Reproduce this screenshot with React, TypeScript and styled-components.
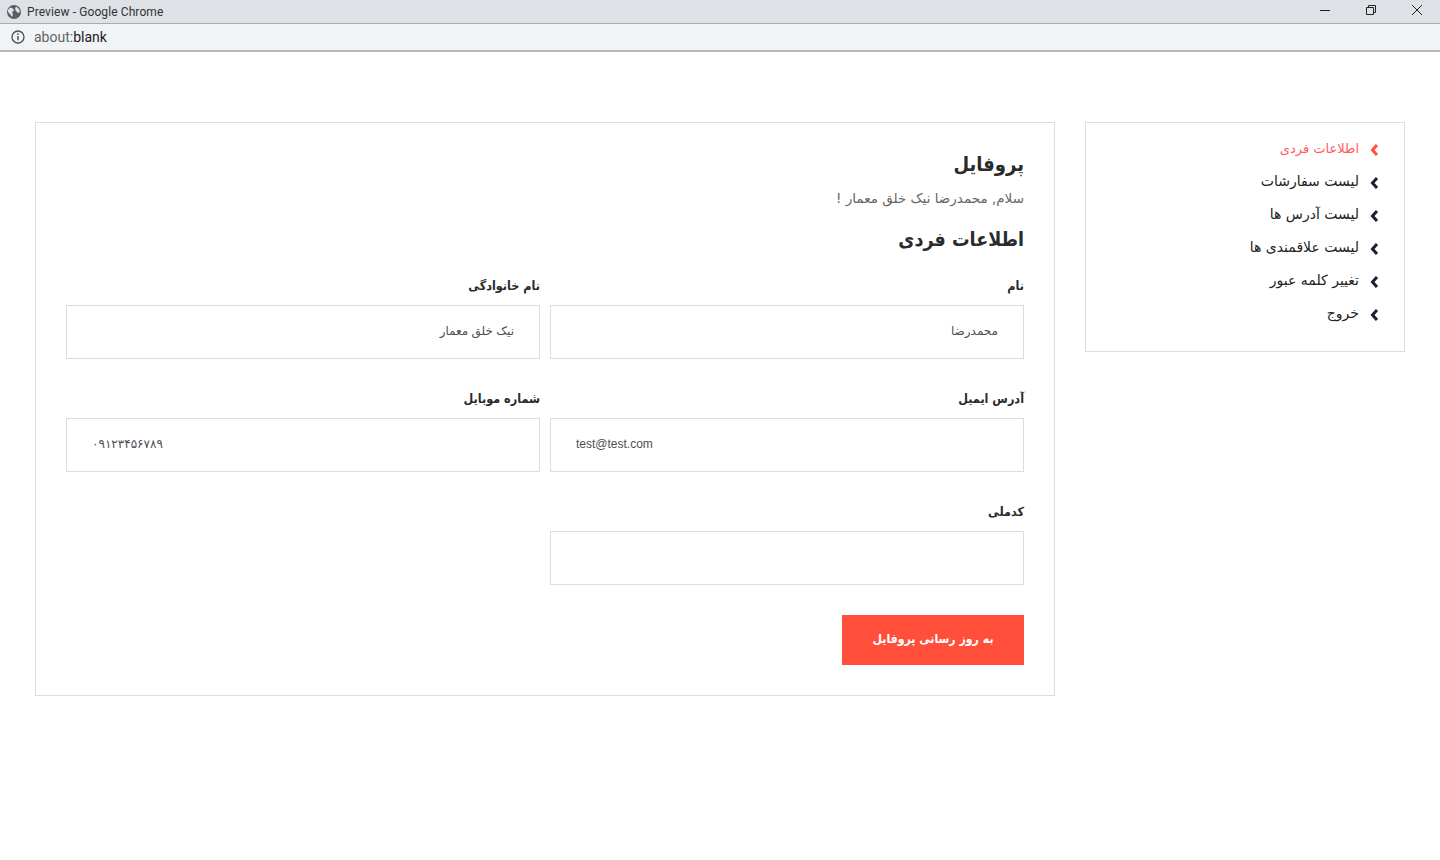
import React from 'react'
import styled, { createGlobalStyle } from 'styled-components'

const GlobalStyle = createGlobalStyle`
  html, body {
    margin: 0;
    padding: 0;
    background: #fff;
    font-family: "DejaVu Sans", "Noto Sans", sans-serif;
  }
  * { box-sizing: border-box; }
`

const menuItems = [
  'اطلاعات فردی',
  'لیست سفارشات',
  'لیست آدرس ها',
  'لیست علاقمندی ها',
  'تغییر کلمه عبور',
  'خروج',
]

const App = () => {
  return (
    <>
      <GlobalStyle />
      <TitleBar>
        <TitleLeft>
          <svg width='14' height='14' viewBox='0 0 14 14'>
            <circle cx='7' cy='7' r='7' fill='#5a5d62' />
            <path d='M3 2.5l3 1 1 2-2 1.5 1 2.5-1 2.5-2-3-2-2 0-2zM9 1.5l3 2.5 1 3-2 1-2-2-1-2z' fill='#dee1e6' />
          </svg>
          <TitleText>Preview - Google Chrome</TitleText>
        </TitleLeft>
        <WindowButtons>
          <svg width='10' height='10' viewBox='0 0 10 10'>
            <path d='M0 5.5h10' stroke='#222' fill='none' />
          </svg>
          <svg width='10' height='10' viewBox='0 0 10 10'>
            <path d='M.5 2.5h7v7h-7zM2.5 2.5v-2h7v7h-2' stroke='#222' fill='none' />
          </svg>
          <svg width='10' height='10' viewBox='0 0 10 10'>
            <path d='M0 0l10 10M10 0L0 10' stroke='#222' fill='none' />
          </svg>
        </WindowButtons>
      </TitleBar>
      <AddressBar>
        <svg width='14' height='14' viewBox='0 0 14 14'>
          <circle cx='7' cy='7' r='6' stroke='#4a4d52' strokeWidth='1.3' fill='none' />
          <path d='M7 6v4.2M7 3.6v1.3' stroke='#4a4d52' strokeWidth='1.4' fill='none' />
        </svg>
        <Url>
          <span>about:</span>
          <b>blank</b>
        </Url>
      </AddressBar>

      <Page dir='rtl'>
        <Sidebar>
          <MenuList>
            {menuItems.map((item, i) => (
              <MenuItem key={item} $active={i === 0}>
                <Chevron width='10' height='14' viewBox='0 0 10 14'>
                  <path d='M8 2L3.5 7 8 12' stroke='currentColor' strokeWidth='3' fill='none' />
                </Chevron>
                <MenuText $active={i === 0}>{item}</MenuText>
              </MenuItem>
            ))}
          </MenuList>
        </Sidebar>

        <Card>
          <Heading>پروفایل</Heading>
          <Greeting>سلام, محمدرضا نیک خلق معمار !</Greeting>
          <SubHeading>اطلاعات فردی</SubHeading>
          <FormGrid>
            <Field>
              <Label>نام</Label>
              <Input defaultValue='محمدرضا' />
            </Field>
            <Field>
              <Label>نام خانوادگی</Label>
              <Input defaultValue='نیک خلق معمار' />
            </Field>
            <Field>
              <Label>آدرس ایمیل</Label>
              <Input dir='ltr' defaultValue='test@test.com' />
            </Field>
            <Field>
              <Label>شماره موبایل</Label>
              <Input dir='ltr' defaultValue='۰۹۱۲۳۴۵۶۷۸۹' />
            </Field>
            <Field>
              <Label>کدملی</Label>
              <Input />
            </Field>
          </FormGrid>
          <SubmitButton type='button'>به روز رسانی پروفایل</SubmitButton>
        </Card>
      </Page>
    </>
  )
}

const TitleBar = styled.div`
  height: 24px;
  background: #dee1e6;
  border-bottom: 1px solid #a9abae;
  display: flex;
  align-items: center;
  justify-content: space-between;
  padding: 0 18px 0 7px;
`

const TitleLeft = styled.div`
  display: flex;
  align-items: center;
  gap: 6px;
`

const TitleText = styled.span`
  font-family: "Roboto", sans-serif;
  font-size: 12px;
  letter-spacing: 0.1px;
  color: #333;
`

const WindowButtons = styled.div`
  display: flex;
  align-items: center;
  gap: 36px;
  padding-bottom: 4px;
`

const AddressBar = styled.div`
  height: 28px;
  background: #f1f3f4;
  border-bottom: 2px solid #b5b6b7;
  display: flex;
  align-items: center;
  gap: 9px;
  padding: 0 11px;
`

const Url = styled.div`
  font-family: "Roboto", sans-serif;
  font-size: 14px;
  color: #5f6368;

  b {
    font-weight: 400;
    color: #202124;
  }
`

const Page = styled.main`
  display: flex;
  align-items: flex-start;
  gap: 30px;
  padding: 70px 35px 0;
`

const Sidebar = styled.aside`
  width: 320px;
  height: 230px;
  border: 1px solid #ddd;
  padding: 9px 25px;
  flex-shrink: 0;
`

const MenuList = styled.ul`
  list-style: none;
  margin: 0;
  padding: 0;
`

const MenuItem = styled.li<{ $active?: boolean }>`
  height: 33px;
  display: flex;
  align-items: center;
  gap: 10px;
  color: ${(p) => (p.$active ? '#ff4f3b' : '#1b2130')};
`

const Chevron = styled.svg`
  margin-top: 3px;
  flex-shrink: 0;
`

const MenuText = styled.span<{ $active?: boolean }>`
  margin-bottom: ${(p) => (p.$active ? '0' : '2px')};
  font-size: ${(p) => (p.$active ? '13px' : '14px')};
  line-height: 1;
  color: ${(p) => (p.$active ? '#ff5c5c' : '#222')};
`

const Card = styled.section`
  width: 1020px;
  height: 574px;
  border: 1px solid #ddd;
  padding: 30px;
  display: flex;
  flex-direction: column;
  align-items: flex-start;
`

const Heading = styled.h1`
  margin: 0;
  font-family: "DejaVu Sans Condensed", "DejaVu Sans", sans-serif;
  font-size: 20px;
  line-height: 22px;
  font-weight: 700;
  color: #292b2c;
`

const Greeting = styled.p`
  margin: 13px 0 0;
  font-size: 13.5px;
  line-height: 20px;
  color: #666;
`

const SubHeading = styled.h2`
  margin: 19px 0 0;
  font-family: "DejaVu Sans Condensed", "DejaVu Sans", sans-serif;
  font-size: 19.5px;
  line-height: 26px;
  font-weight: 700;
  color: #292b2c;
`

const FormGrid = styled.div`
  width: 100%;
  margin-top: 23px;
  display: grid;
  grid-template-columns: repeat(2, 474px);
  column-gap: 10px;
  row-gap: 30px;
`

const Field = styled.div`
  display: flex;
  flex-direction: column;
`

const Label = styled.label`
  height: 29px;
  font-family: "DejaVu Sans Condensed", "DejaVu Sans", sans-serif;
  font-size: 12.5px;
  line-height: 20px;
  font-weight: 700;
  color: #292b2c;
`

const Input = styled.input`
  height: 54px;
  border: 1px solid #ddd;
  padding: 0 25px 2px;
  outline: none;
  background: #fff;
  font-family: "Liberation Sans", "DejaVu Sans", sans-serif;
  font-size: 12px;
  color: #495057;
`

const SubmitButton = styled.button`
  width: 182px;
  height: 50px;
  margin-top: 30px;
  padding: 0 0 3px;
  border: 0;
  background: #ff4f3b;
  color: #fff;
  font-family: "DejaVu Sans Condensed", "DejaVu Sans", sans-serif;
  font-size: 12.2px;
  font-weight: 700;
`

export default App
